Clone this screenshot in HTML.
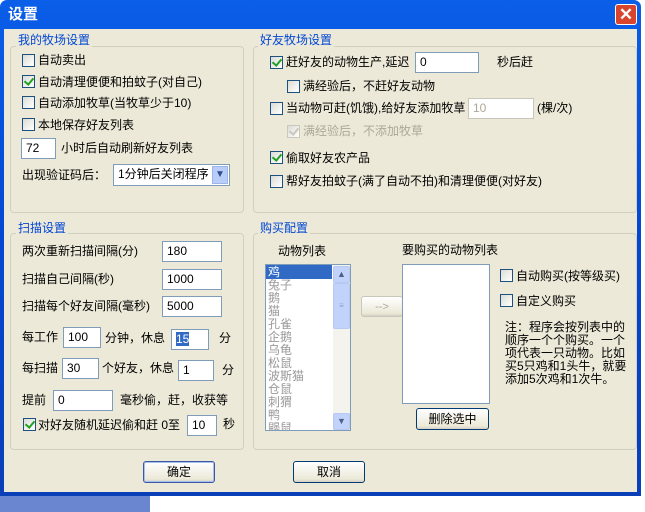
<!DOCTYPE html>
<html><head><meta charset="utf-8"><style>
*{margin:0;padding:0;box-sizing:border-box}
body{width:645px;height:512px;position:relative;overflow:hidden;background:#fff;font:12px "Liberation Sans","Noto Sans CJK SC","WenQuanYi Zen Hei",sans-serif;color:#000}
.a{position:absolute;white-space:nowrap;line-height:14px}
#win{position:absolute;left:0;top:0;width:641px;height:496px;background:linear-gradient(#0a5ee8,#0447d0 50%,#0a3fb8);border-radius:7px 7px 0 0}
#body{position:absolute;left:4px;top:29px;width:633px;height:463px;background:#ece9d8}
.g{position:absolute;border:1px solid #d0d0bf;border-radius:4px}
.gl{position:absolute;background:#ece9d8;color:#0046d5;padding:0 2px;line-height:14px}
.cb{position:absolute;width:13px;height:13px;border:1px solid #1c5180;background:linear-gradient(135deg,#dcdcd5,#fff)}
.cb.c::after{content:"";position:absolute;left:3px;top:0px;width:4px;height:7px;border:solid #21a121;border-width:0 2px 2px 0;transform:rotate(40deg)}
.cb.d{border-color:#cac8bb}
.cb.d.c::after{border-color:#cac8bb}
.in{position:absolute;height:21px;border:1px solid #7f9db9;background:#fff;padding-left:4px;line-height:19px}
.btn{position:absolute;height:22px;border:1px solid #003c74;border-radius:3px;background:linear-gradient(#fff,#ece9d8 85%,#d6d0c5);text-align:center;line-height:20px}
.dis{color:#aca899}
</style></head><body>
<div id="win">
<div class="a" style="left:8px;top:6px;color:#fff;font-size:15px;font-weight:bold;line-height:18px">设置</div>
<div style="position:absolute;left:615px;top:4px;width:22px;height:21px;border:1px solid #fff;border-radius:3px;background:#d9452c;color:#fff;font-size:17px;font-weight:bold;text-align:center;line-height:19px">✕</div>
<div id="body"></div>
</div>
<div style="position:absolute;left:0;top:496px;width:150px;height:16px;background:#6b86d0"></div>

<!-- group 1 -->
<div class="g" style="left:10px;top:46px;width:234px;height:167px"></div>
<div class="gl" style="left:16px;top:33px">我的牧场设置</div>
<div class="cb" style="left:22px;top:54px"></div><div class="a" style="left:38px;top:53px">自动卖出</div>
<div class="cb c" style="left:22px;top:75px"></div><div class="a" style="left:38px;top:75px">自动清理便便和拍蚊子(对自己)</div>
<div class="cb" style="left:22px;top:96px"></div><div class="a" style="left:38px;top:96px">自动添加牧草(当牧草少于10)</div>
<div class="cb" style="left:22px;top:118px"></div><div class="a" style="left:38px;top:118px">本地保存好友列表</div>
<div class="in" style="left:21px;top:138px;width:35px">72</div><div class="a" style="left:61px;top:141px">小时后自动刷新好友列表</div>
<div class="a" style="left:22px;top:168px">出现验证码后：</div>
<div class="in" style="left:113px;top:164px;width:117px;height:22px">1分钟后关闭程序</div>
<div style="position:absolute;left:212px;top:166px;width:16px;height:18px;background:#b9cdf8;border:1px solid #9db4ea;color:#2f4d8e;font-size:10px;text-align:center;line-height:16px">▼</div>

<!-- group 2 -->
<div class="g" style="left:253px;top:46px;width:384px;height:167px"></div>
<div class="gl" style="left:258px;top:33px">好友牧场设置</div>
<div class="cb c" style="left:270px;top:56px"></div><div class="a" style="left:286px;top:55px">赶好友的动物生产,延迟</div>
<div class="in" style="left:415px;top:52px;width:64px">0</div><div class="a" style="left:497px;top:55px">秒后赶</div>
<div class="cb" style="left:287px;top:80px"></div><div class="a" style="left:303px;top:79px">满经验后，不赶好友动物</div>
<div class="cb" style="left:270px;top:102px"></div><div class="a" style="left:286px;top:101px">当动物可赶(饥饿),给好友添加牧草</div>
<div class="in dis" style="left:468px;top:98px;width:66px;border-color:#c9c7ba">10</div><div class="a" style="left:537px;top:101px">(棵/次)</div>
<div class="cb c d" style="left:287px;top:125px"></div><div class="a dis" style="left:303px;top:124px">满经验后，不添加牧草</div>
<div class="cb c" style="left:270px;top:151px"></div><div class="a" style="left:286px;top:151px">偷取好友农产品</div>
<div class="cb" style="left:270px;top:175px"></div><div class="a" style="left:286px;top:174px">帮好友拍蚊子(满了自动不拍)和清理便便(对好友)</div>

<!-- group 3 -->
<div class="g" style="left:10px;top:233px;width:234px;height:217px"></div>
<div class="gl" style="left:16px;top:221px">扫描设置</div>
<div class="a" style="left:22px;top:244px">两次重新扫描间隔(分)</div><div class="in" style="left:162px;top:241px;width:60px">180</div>
<div class="a" style="left:22px;top:272px">扫描自己间隔(秒)</div><div class="in" style="left:162px;top:269px;width:60px">1000</div>
<div class="a" style="left:22px;top:299px">扫描每个好友间隔(毫秒)</div><div class="in" style="left:162px;top:296px;width:60px">5000</div>
<div class="a" style="left:22px;top:330px">每工作</div><div class="in" style="left:63px;top:327px;width:38px">100</div>
<div class="a" style="left:105px;top:331px">分钟，休息</div><div class="in" style="left:171px;top:329px;width:38px"><span style="background:#316ac5;color:#fff">15</span></div><div class="a" style="left:219px;top:331px">分</div>
<div class="a" style="left:22px;top:361px">每扫描</div><div class="in" style="left:62px;top:358px;width:37px">30</div>
<div class="a" style="left:102px;top:361px">个好友，休息</div><div class="in" style="left:178px;top:360px;width:36px">1</div><div class="a" style="left:222px;top:363px">分</div>
<div class="a" style="left:22px;top:393px">提前</div><div class="in" style="left:53px;top:390px;width:60px">0</div><div class="a" style="left:120px;top:393px">毫秒偷，赶，收获等</div>
<div class="cb c" style="left:23px;top:418px"></div><div class="a" style="left:38px;top:418px">对好友随机延迟偷和赶 0至</div>
<div class="in" style="left:187px;top:415px;width:30px">10</div><div class="a" style="left:223px;top:417px">秒</div>

<!-- group 4 -->
<div class="g" style="left:253px;top:233px;width:384px;height:217px"></div>
<div class="gl" style="left:258px;top:221px">购买配置</div>
<div class="a" style="left:278px;top:244px">动物列表</div>
<div class="a" style="left:402px;top:243px">要购买的动物列表</div>
<div style="position:absolute;left:265px;top:264px;width:86px;height:167px;border:1px solid #7f9db9;background:#fff;overflow:hidden">
 <div style="position:absolute;left:0;top:0;width:66px;line-height:13px;font-size:12px;color:#999">
 <div style="background:#316ac5;color:#fff;padding-left:2px;line-height:14px">鸡</div>
 <div style="padding-left:2px">兔子<br>鹅<br>猫<br>孔雀<br>企鹅<br>乌龟<br>松鼠<br>波斯猫<br>仓鼠<br>刺猬<br>鸭<br>鼹鼠</div></div>
 <div style="position:absolute;left:67px;top:0;width:17px;height:165px;background:#f4f3ee"></div>
 <div style="position:absolute;left:67px;top:1px;width:17px;height:17px;background:#c1d3fb;border:1px solid #b7c9f0;border-radius:2px;font-size:9px;color:#4d6185;text-align:center;line-height:15px">▲</div>
 <div style="position:absolute;left:67px;top:18px;width:17px;height:46px;background:#c1d3fb;border:1px solid #b7c9f0;border-radius:2px;font-size:8px;color:#8ca0c8;text-align:center;line-height:44px">≡</div>
 <div style="position:absolute;left:67px;top:148px;width:17px;height:17px;background:#c1d3fb;border:1px solid #b7c9f0;border-radius:2px;font-size:9px;color:#4d6185;text-align:center;line-height:15px">▼</div>
</div>
<div class="btn dis" style="left:361px;top:296px;width:42px;height:21px;border-color:#c9c7ba;font-size:11px">--&gt;</div>
<div style="position:absolute;left:402px;top:264px;width:88px;height:140px;border:1px solid #7f9db9;background:#fff"></div>
<div class="btn" style="left:416px;top:408px;width:73px">删除选中</div>
<div class="cb" style="left:500px;top:269px"></div><div class="a" style="left:516px;top:269px">自动购买(按等级买)</div>
<div class="cb" style="left:500px;top:294px"></div><div class="a" style="left:516px;top:294px">自定义购买</div>
<div class="a" style="left:505px;top:321px;line-height:13px">注：程序会按列表中的<br>顺序一个个购买。一个<br>项代表一只动物。比如<br>买5只鸡和1头牛，就要<br>添加5次鸡和1次牛。</div>

<div class="btn" style="left:143px;top:461px;width:72px;border-color:#3c57a6;box-shadow:inset 0 0 0 1px #a8c0f0">确定</div>
<div class="btn" style="left:293px;top:461px;width:72px">取消</div>
</body></html>
